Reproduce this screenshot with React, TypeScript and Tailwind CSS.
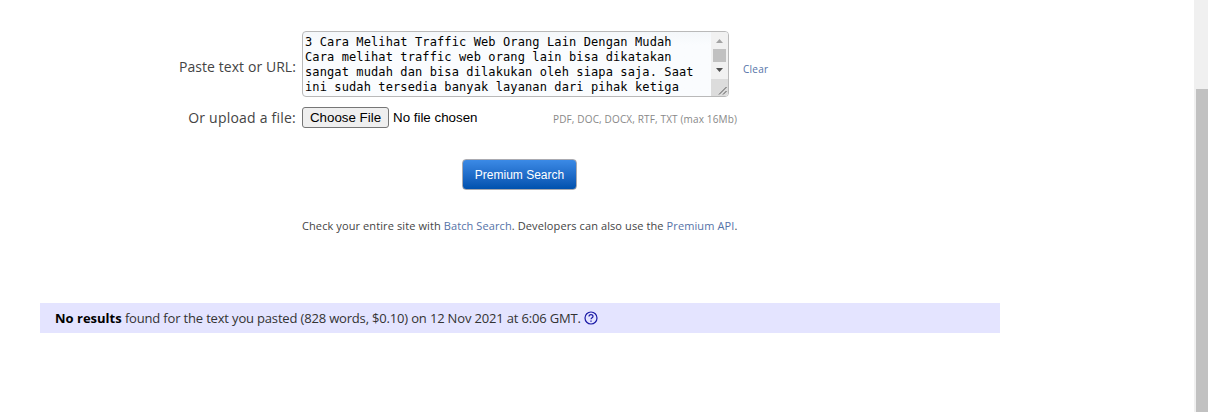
const pastedLines = [
  "3 Cara Melihat Traffic Web Orang Lain Dengan Mudah",
  "Cara melihat traffic web orang lain bisa dikatakan",
  "sangat mudah dan bisa dilakukan oleh siapa saja. Saat",
  "ini sudah tersedia banyak layanan dari pihak ketiga",
];

function TextBox() {
  return (
    <div className="flex h-[66px] w-[427px] overflow-hidden rounded border border-[#b9b9b9] bg-[#f8fbfd] bg-linear-to-b from-[#f4f7fa] to-[#fafcfe] to-20%">
      <div className="flex-1 pt-[3px] pl-[2px] font-['DejaVu_Sans_Mono',monospace] text-[12px] leading-[15px] tracking-[0.108px] whitespace-pre text-black">
        {pastedLines.map((line) => (
          <div key={line}>{line}</div>
        ))}
      </div>
      <svg width="17" height="64" viewBox="0 0 17 64" className="shrink-0">
        <path d="M0 0h17v64H0z" fill="#f1f1f1" />
        <path d="M0 47h17v17H0z" fill="#dcdcdc" />
        <path d="M2 17h13v13H2z" fill="#c1c1c1" />
        <path d="M5 11l3.500-4 3.500 4z" fill="#a3a3a3" />
        <path d="M5 36h7l-3.500 4z" fill="#505050" />
        <path d="M8 62.500l7.500-7.500M12 62.500l3.500-3.500" stroke="#555" strokeWidth="1" fill="none" />
      </svg>
    </div>
  );
}

function HelpIcon() {
  return (
    <svg width="14" height="14" viewBox="0 0 14 14" fill="none" stroke="#1a1aa6" className="ml-[3px] shrink-0">
      <circle cx="7" cy="7" r="6" strokeWidth="1.200" />
      <path d="M5 5.500C5 3 9 3 9 5.400C9 6.700 7 6.700 7 8.300" strokeWidth="1.200" />
      <path d="M7 9.500v1.300" strokeWidth="1.300" />
    </svg>
  );
}

export default function App() {
  return (
    <div className="flex h-[412px] w-[1208px] overflow-hidden bg-white font-['Open_Sans',sans-serif] text-[#444]">
      <main className="flex-1 pt-[31px] pl-10">
        <div className="flex h-[66px] items-center">
          <div className="w-64 pt-[6px] text-right text-[14px] leading-5 tracking-[0.07px] whitespace-nowrap">
            Paste text or URL:
          </div>
          <div className="ml-[6px]">
            <TextBox />
          </div>
          <a className="ml-[14px] pt-[9px] text-[10px] leading-4 tracking-[0.25px] text-[#5572a7]">Clear</a>
        </div>

        <div className="mt-[10px] flex h-[21px] items-center">
          <div className="w-64 text-right text-[14px] leading-5 tracking-[0.22px] whitespace-nowrap">
            Or upload a file:
          </div>
          <button className="ml-[6px] h-[21px] w-[87px] rounded-[3px] border border-[#767676] bg-[#efefef] font-['Liberation_Sans',sans-serif] text-[13.333px] leading-[19px] whitespace-nowrap text-black">
            Choose File
          </button>
          <span className="ml-1 w-[160px] font-['Liberation_Sans',sans-serif] text-[13.333px] leading-5 whitespace-nowrap text-black">
            No file chosen
          </span>
          <span className="pt-[2px] text-[10px] leading-4 tracking-[0.145px] whitespace-nowrap text-[#888]">
            PDF, DOC, DOCX, RTF, TXT (max 16Mb)
          </span>
        </div>

        <button className="mt-[31px] ml-[422px] block h-[31px] w-[115px] rounded border border-[#aaaab0] bg-linear-to-b from-[#3b8ae6] to-[#0051ae] font-['Liberation_Sans',sans-serif] text-[12px] text-white">
          Premium Search
        </button>

        <p className="mt-7 ml-[262px] text-[11px] leading-4 tracking-[0.1px] whitespace-nowrap">
          Check your entire site with <a className="text-[#5572a7]">Batch Search</a>. Developers can also use the{" "}
          <a className="text-[#5572a7]">Premium API</a>.
        </p>

        <div className="mt-[69px] flex h-[30px] w-[960px] items-center bg-[#e4e4ff] pl-[15px] text-[13px] leading-5 tracking-[-0.17px] whitespace-nowrap text-[#333]">
          <span>
            <b className="font-bold tracking-normal text-black">No results</b> found for the text you pasted (828 words,
            $0.10) on 12 Nov 2021 at 6:06 GMT.
          </span>
          <HelpIcon />
        </div>
      </main>
      <div className="w-[14px] bg-[#f0f0f0] pt-[89px] pl-[2px]">
        <div className="h-[323px] bg-[#c1c1c1]" />
      </div>
    </div>
  );
}
